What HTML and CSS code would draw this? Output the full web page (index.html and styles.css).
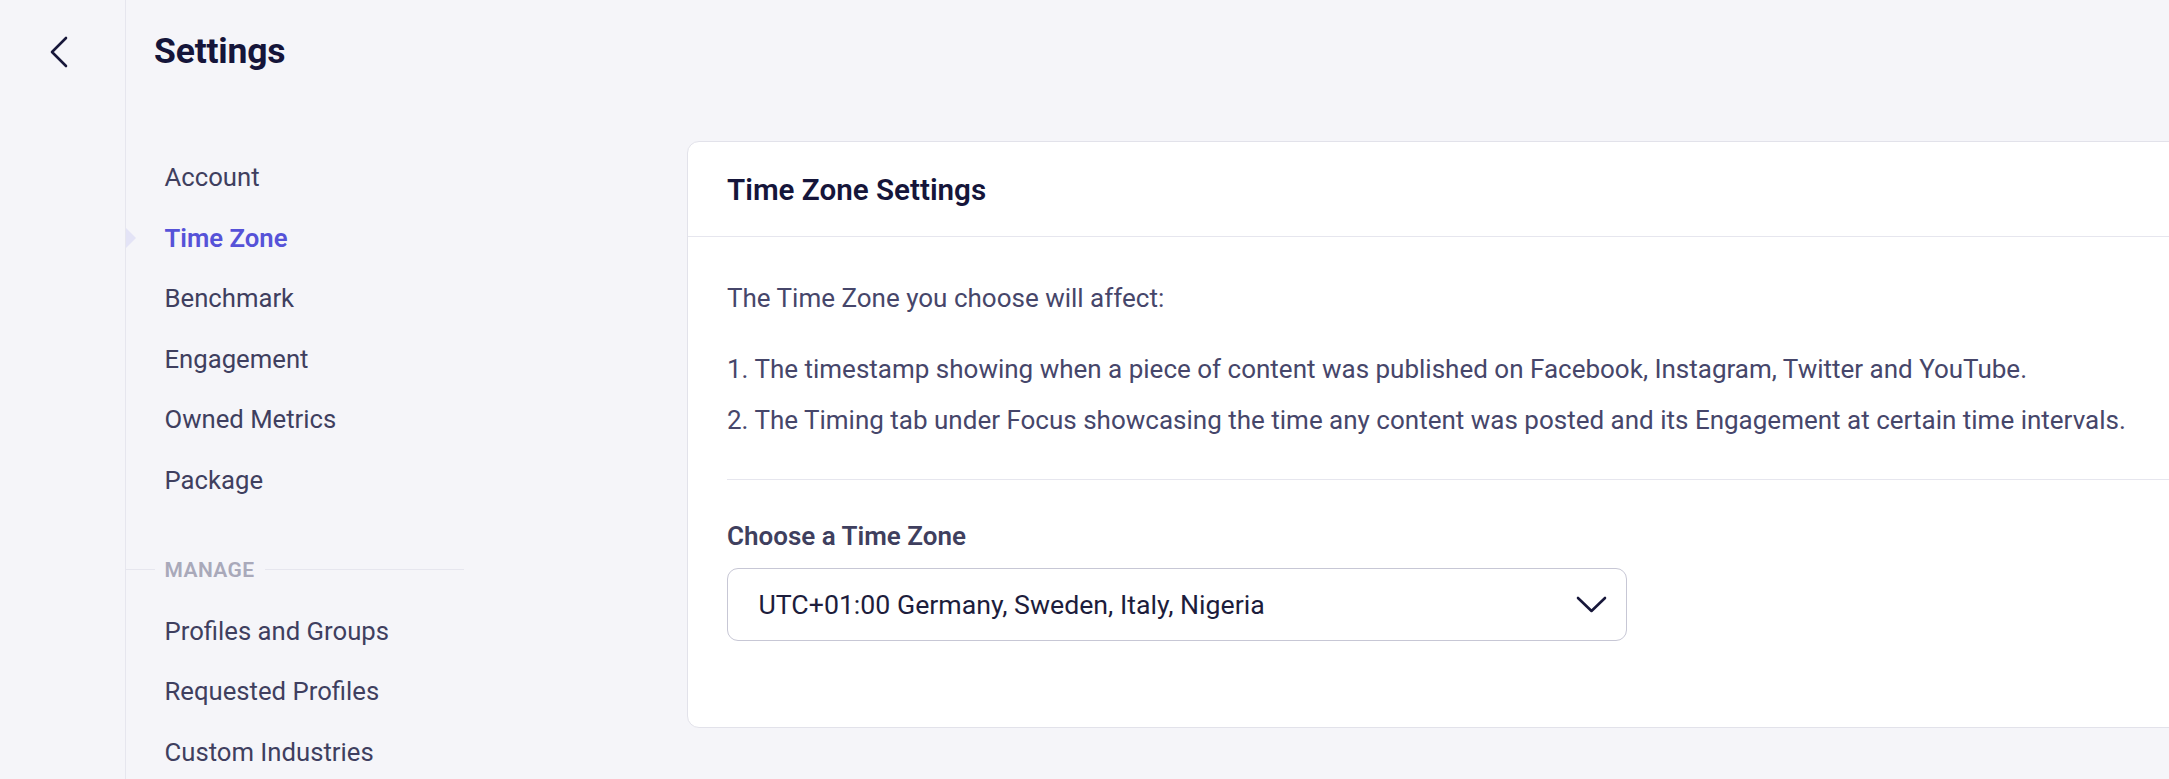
FILE: index.html
```html
<!DOCTYPE html>
<html lang="en">
<head>
<meta charset="utf-8">
<title>Settings</title>
<link rel="stylesheet" href="styles.css">
</head>
<body>
<div class="app">
  <aside class="rail">
    <button class="back" aria-label="Back">
      <svg width="20" height="32" viewBox="0 0 20 32" fill="none" stroke="#17173a" stroke-width="2.6" stroke-linecap="round" stroke-linejoin="round"><polyline points="17,2 3,16 17,30"/></svg>
    </button>
  </aside>
  <div class="main">
    <header class="topbar"><h1 class="title">Settings</h1></header>
    <div class="body">
      <nav class="sidenav">
        <ul class="navlist">
          <li class="navitem">Account</li>
          <li class="navitem active">Time Zone</li>
          <li class="navitem">Benchmark</li>
          <li class="navitem">Engagement</li>
          <li class="navitem">Owned Metrics</li>
          <li class="navitem">Package</li>
        </ul>
        <div class="section"><span class="section-line short"></span><span class="section-label">MANAGE</span><span class="section-line"></span></div>
        <ul class="navlist">
          <li class="navitem">Profiles and Groups</li>
          <li class="navitem">Requested Profiles</li>
          <li class="navitem">Custom Industries</li>
        </ul>
      </nav>
      <section class="content">
        <div class="card">
          <div class="card-head"><h2 class="card-title">Time Zone Settings</h2></div>
          <div class="card-body">
            <p class="text intro">The Time Zone you choose will affect:</p>
            <p class="text item1">1. The timestamp showing when a piece of content was published on Facebook, Instagram, Twitter and YouTube.</p>
            <p class="text item2">2. The Timing tab under Focus showcasing the time any content was posted and its Engagement at certain time intervals.</p>
            <div class="divider"></div>
            <label class="label">Choose a Time Zone</label>
            <div class="select">
              <span class="select-value">UTC+01:00 Germany, Sweden, Italy, Nigeria</span>
              <svg class="chev" width="31" height="17" viewBox="0 0 31 17" fill="none" stroke="#17173a" stroke-width="2.6" stroke-linecap="round" stroke-linejoin="round"><polyline points="2,2 15.5,15 29,2"/></svg>
            </div>
          </div>
        </div>
      </section>
    </div>
  </div>
</div>
</body>
</html>
```
FILE: styles.css
```css
* { box-sizing: border-box; }
html, body { margin: 0; padding: 0; }
body {
  background: #f5f5f9;
  font-family: Roboto, "Liberation Sans", sans-serif;
  color: #3f3f5f;
  width: 2169px;
  height: 779px;
  overflow: hidden;
}
.app { display: flex; height: 779px; }
.rail {
  width: 126px;
  flex: 0 0 126px;
  border-right: 1px solid #e6e6ee;
  padding-top: 36px;
}
.back {
  display: block;
  margin-left: 49px;
  padding: 0;
  border: 0;
  background: none;
  width: 20px;
  height: 32px;
}
.back svg { display: block; }
.main { flex: 1; display: flex; flex-direction: column; min-width: 0; }
.topbar { height: 100px; padding: 31px 0 0 28px; }
.title {
  margin: 0;
  font-size: 35.5px;
  line-height: 40px;
  font-weight: 700;
  color: #15153a;
  letter-spacing: -0.2px;
}
.body { display: flex; flex: 1; min-height: 0; }
.sidenav { width: 338px; flex: 0 0 338px; padding-top: 47px; }
.navlist { list-style: none; margin: 0; padding: 0; }
.navitem {
  position: relative;
  height: 60.6px;
  line-height: 60.6px;
  padding-left: 38.5px;
  font-size: 25.7px;
  color: #3f3f5f;
  white-space: nowrap;
}
.navitem.active { color: #5652d8; font-weight: 600; }
.navitem.active::before {
  content: "";
  position: absolute;
  left: 0;
  top: 50%;
  margin-top: -10px;
  border-left: 10px solid #e3e3f6;
  border-top: 10px solid transparent;
  border-bottom: 10px solid transparent;
}
.section {
  display: flex;
  align-items: center;
  height: 24px;
  margin: 47px 0 19px;
}
.section-line { flex: 1; height: 1px; background: #e6e6ee; }
.section-line.short { flex: 0 0 29px; }
.section-label {
  padding: 0 10px 0 9.5px;
  font-size: 21px;
  line-height: 24px;
  font-weight: 600;
  color: #a9a9ba;
  letter-spacing: 0.4px;
}
.content { flex: 1; padding: 41px 0 0 223px; overflow: hidden; }
.card {
  width: 1600px;
  background: #fff;
  border: 1px solid #e2e2ea;
  border-radius: 12px;
}
.card-head {
  height: 95px;
  padding: 30px 0 0 39px;
  border-bottom: 1px solid #e6e6ee;
}
.card-title {
  margin: 0;
  font-size: 29.6px;
  line-height: 36px;
  font-weight: 600;
  color: #15153a;
}
.card-body { padding: 45px 0 86px 39px; }
.text {
  margin: 0;
  font-size: 26px;
  line-height: 32px;
  color: #46466a;
  white-space: nowrap;
}
.item1 { margin-top: 39px; }
.item2 { margin-top: 19px; }
.divider { height: 1px; background: #e6e6ee; margin-top: 43px; }
.label {
  display: block;
  margin-top: 40px;
  font-size: 26px;
  line-height: 32px;
  font-weight: 600;
  color: #3f3f5e;
}
.select {
  display: flex;
  align-items: center;
  justify-content: space-between;
  width: 900px;
  height: 73.5px;
  margin-top: 15.5px;
  padding: 2px 19px 0 30.5px;
  border: 1.5px solid #c7c7d5;
  border-radius: 11px;
  background: #fff;
}
.select-value {
  font-size: 26.7px;
  line-height: 32px;
  color: #1d1d3c;
  white-space: nowrap;
}
.chev { display: block; margin-top: -2px; }
```
